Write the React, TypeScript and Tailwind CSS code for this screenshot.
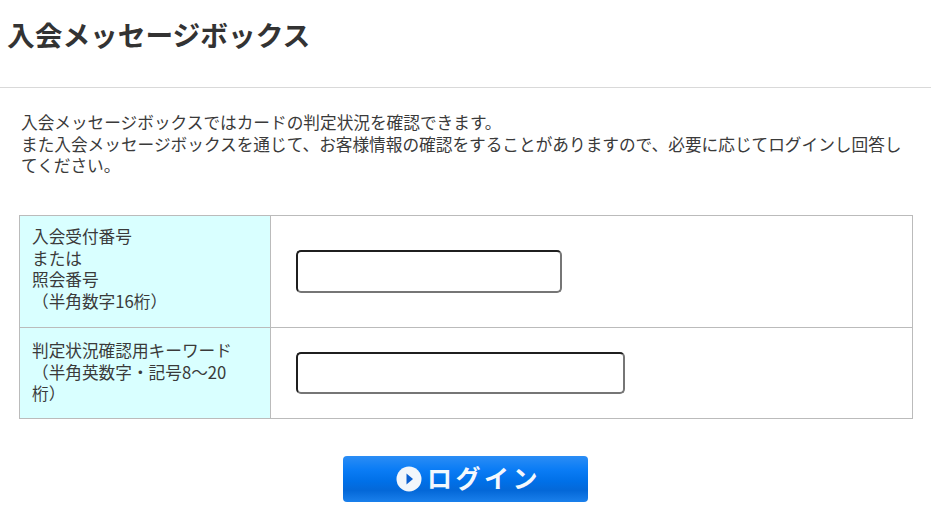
const font = { jp: "font-['Noto_Sans_CJK_JP','Liberation_Sans',sans-serif]" }

function LoginButton() {
  return (
    <button
      type="button"
      className="flex h-[46px] w-[245px] items-center justify-center gap-[5px] rounded-[4px] bg-[linear-gradient(#2b8df5_0%,#0a7cf5_30%,#0070e8_55%,#0468d8_75%,#1a80ec_100%)] pl-[6px]"
    >
      <svg width="26" height="26" viewBox="0 0 26 26">
        <circle cx="13" cy="13" r="12.5" fill="#f2f6fb" />
        <path d="M10.5 7.5 L17 13 L10.5 18.5 Z" fill="#0a5fd0" />
      </svg>
      <span className="pb-[3px] text-[25px] font-bold leading-none tracking-[3.5px] text-[#f4f8fd]">ログイン</span>
    </button>
  )
}

export default function App() {
  return (
    <div className={`${font.jp} h-[521px] w-[931px] overflow-hidden bg-white text-[#3a3a3a]`}>
      <div className="h-[88px] border-b border-[#d9d9d9] pl-[7px] pt-[14px]">
        <h1 className="text-[27.7px] font-bold leading-[40px] text-[#333]">入会メッセージボックス</h1>
      </div>

      <p className="mt-[24px] w-[908px] pl-[21px] text-[16.67px] leading-[21.5px]">
        入会メッセージボックスではカードの判定状況を確認できます。
        <br />
        また入会メッセージボックスを通じて、お客様情報の確認をすることがありますので、必要に応じてログインし回答してください。
      </p>

      <table className="ml-[19px] mt-[38px] w-[894px] table-fixed border-collapse text-[16.67px] leading-[21.5px]">
        <tbody>
          <tr className="h-[112px]">
            <th className="w-[251px] border border-[#bbb] bg-[#d9ffff] pb-[4px] pl-[12px] pr-[20px] text-left align-middle font-normal">
              入会受付番号
              <br />
              または
              <br />
              照会番号
              <br />
              （半角数字16桁）
            </th>
            <td className="border border-[#bbb] pl-[25px] align-middle">
              <input type="text" className="block h-[43px] w-[266px] rounded-[5px] border-2 border-b-[#767676] border-l-[#1f1f1f] border-r-[#767676] border-t-[#1f1f1f] bg-white" />
            </td>
          </tr>
          <tr className="h-[91px]">
            <th className="border border-[#bbb] bg-[#d9ffff] pl-[12px] pr-[30px] text-left align-middle font-normal">
              判定状況確認用キーワード
              <br />
              （半角英数字・記号8～20桁）
            </th>
            <td className="border border-[#bbb] pl-[25px] align-middle">
              <input type="text" className="block h-[42px] w-[329px] rounded-[5px] border-2 border-b-[#767676] border-l-[#1f1f1f] border-r-[#767676] border-t-[#1f1f1f] bg-white" />
            </td>
          </tr>
        </tbody>
      </table>

      <div className="mt-[37px] flex justify-center">
        <LoginButton />
      </div>
    </div>
  )
}
